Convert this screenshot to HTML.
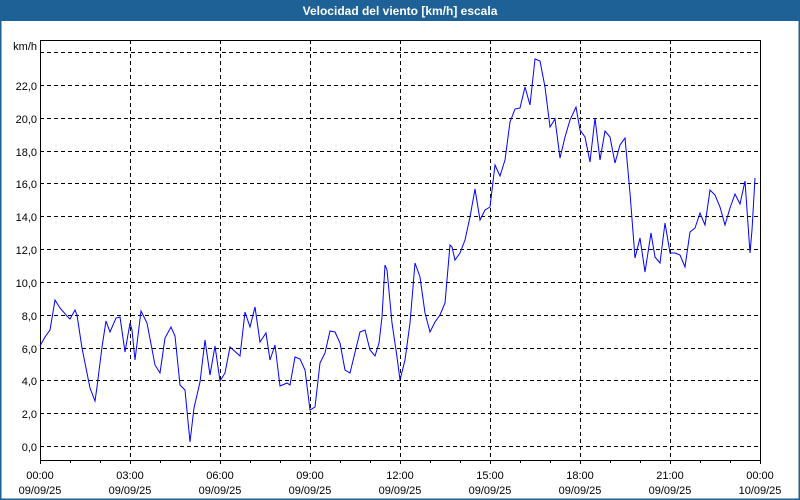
<!DOCTYPE html>
<html><head><meta charset="utf-8"><style>
html,body{margin:0;padding:0;width:800px;height:500px;overflow:hidden;background:#fff}
svg{display:block;font-family:"Liberation Sans",Tahoma,sans-serif}
</style></head><body>
<svg width="800" height="500" viewBox="0 0 800 500" xmlns="http://www.w3.org/2000/svg">
<rect x="0" y="0" width="800" height="500" fill="#fff"/>
<rect x="0.5" y="0.5" width="799" height="499" fill="none" stroke="#1e6197" stroke-width="2"/>
<rect x="0" y="0" width="800" height="21" fill="#1e6197"/>
<text x="400" y="15" text-anchor="middle" fill="#fff" font-size="12" font-weight="bold">Velocidad del viento [km/h] escala</text>
<g stroke="#000" stroke-width="1" stroke-dasharray="4,3" fill="none">
<path d="M40 52.5H760M40 85.5H760M40 118.5H760M40 151.5H760M40 183.5H760M40 216.5H760M40 249.5H760M40 282.5H760M40 315.5H760M40 348.5H760M40 380.5H760M40 413.5H760M40 446.5H760"/>
<path d="M130.5 40V460M220.5 40V460M310.5 40V460M400.5 40V460M490.5 40V460M580.5 40V460M670.5 40V460"/>
</g>
<rect x="40.5" y="40.5" width="720" height="420" fill="none" stroke="#000"/>
<path stroke="#000" d="M40.5 460v4M70.5 460v3M100.5 460v3M130.5 460v4M160.5 460v3M190.5 460v3M220.5 460v4M250.5 460v3M280.5 460v3M310.5 460v4M340.5 460v3M370.5 460v3M400.5 460v4M430.5 460v3M460.5 460v3M490.5 460v4M520.5 460v3M550.5 460v3M580.5 460v4M610.5 460v3M640.5 460v3M670.5 460v4M700.5 460v3M730.5 460v3M760.5 460v4"/>
<g font-size="11" fill="#000" text-anchor="end">
<text x="37" y="50">km/h</text>
<text x="37" y="90">22,0</text><text x="37" y="123">20,0</text><text x="37" y="156">18,0</text>
<text x="37" y="188">16,0</text><text x="37" y="221">14,0</text><text x="37" y="254">12,0</text>
<text x="37" y="287">10,0</text><text x="37" y="320">8,0</text><text x="37" y="353">6,0</text>
<text x="37" y="385">4,0</text><text x="37" y="418">2,0</text><text x="37" y="451">0,0</text>
</g>
<g font-size="11" fill="#000" text-anchor="middle">
<text x="40" y="479">00:00</text><text x="40" y="494">09/09/25</text>
<text x="130" y="479">03:00</text><text x="130" y="494">09/09/25</text>
<text x="220" y="479">06:00</text><text x="220" y="494">09/09/25</text>
<text x="310" y="479">09:00</text><text x="310" y="494">09/09/25</text>
<text x="400" y="479">12:00</text><text x="400" y="494">09/09/25</text>
<text x="490" y="479">15:00</text><text x="490" y="494">09/09/25</text>
<text x="580" y="479">18:00</text><text x="580" y="494">09/09/25</text>
<text x="670" y="479">21:00</text><text x="670" y="494">09/09/25</text>
<text x="760" y="479">00:00</text><text x="760" y="494">10/09/25</text>
</g>
<polyline fill="none" stroke="#0000ff" stroke-width="1" points="40,346 45,337 50,330 55,300 60,308 67,316 70,319 75,310 77,315 82,348 90,388 95,401 97,387 102,347 106,321 110,332 116,318 120,317 125,352 130,323 132,330 135,360 141,311 147,323 155,365 160,373 165,338 171,327 175,336 180,385 185,390 190,442 194,408 200,382 205,340 210,375 215,346 220,381 225,373 230,347 240,356 245,312 250,327 255,307 260,342 266,333 270,360 275,345 280,386 287,383 290,385 295,357 300,359 305,370 310,410 315,407 320,363 325,353 330,331 335,332 340,343 345,370 350,373 360,332 365,330 370,350 375,356 379,343 382,317 385,265 387,270 392,323 397,357 400,380 405,360 410,323 415,263 420,277 425,313 430,332 435,322 440,315 445,303 450,245 452,247 455,260 460,253 465,240 470,217 475,189 480,220 485,210 490,207 495,165 500,176 505,160 510,122 515,109 520,108 525,87 530,105 535,59 540,61 545,87 550,127 555,119 560,158 565,137 570,120 576,107 580,130 585,137 590,162 595,118 600,160 605,131 610,137 615,163 620,145 625,138 630,193 635,258 640,238 645,272 651,233 655,257 660,263 665,223 670,253 675,253 680,255 685,267 690,232 695,228 700,213 705,225 710,190 715,195 720,207 725,225 730,208 735,194 740,204 745,181 750,253 752,230 755,178"/>
</svg>
</body></html>
